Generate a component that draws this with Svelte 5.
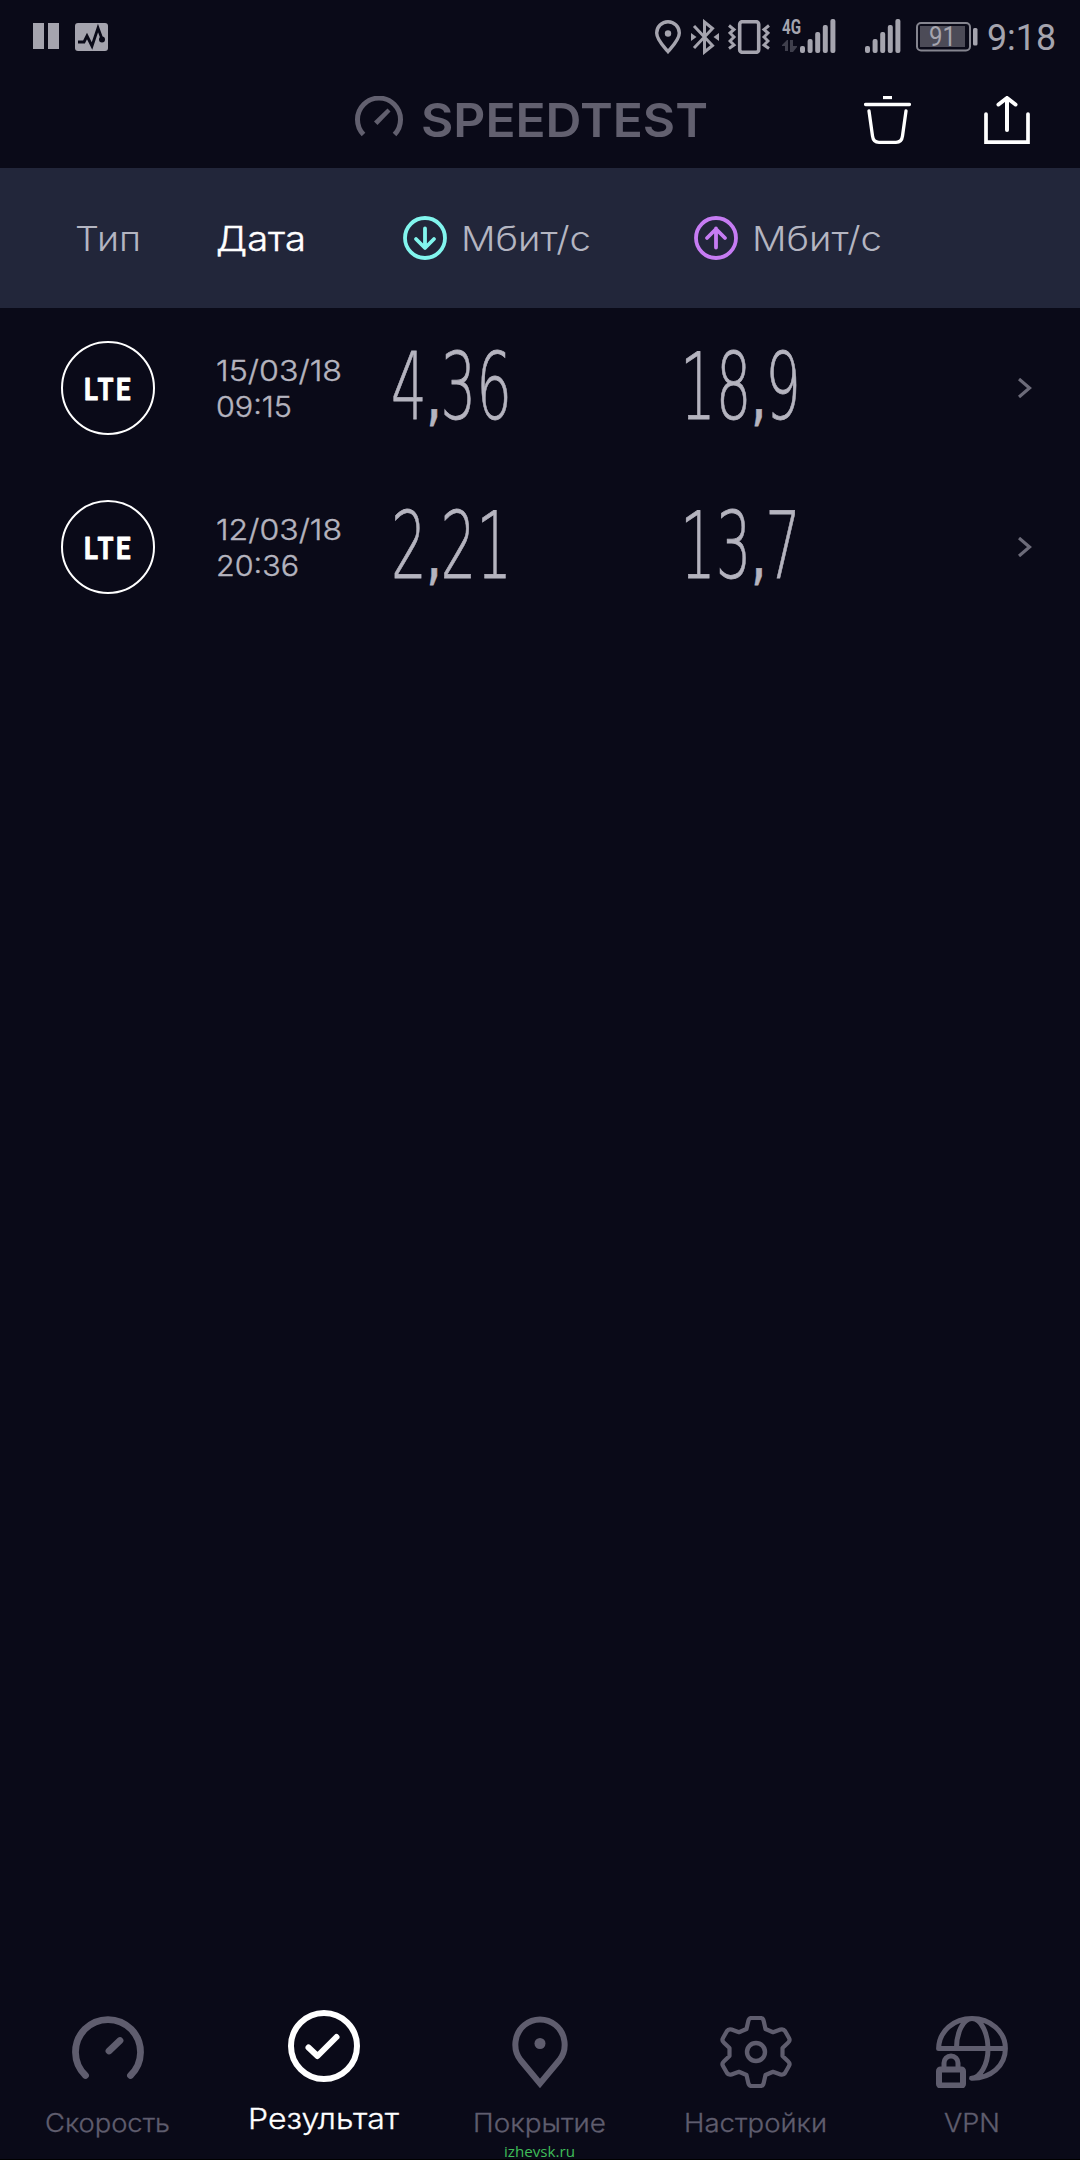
<script lang="ts">
  interface Result {
    type: string
    date: string
    time: string
    timeWidth: number
    download: string
    upload: string
  }

  interface Tab {
    id: string
    label: string
    width: number
  }

  const results: Result[] = [
    { type: 'LTE', date: '15/03/18', time: '09:15', timeWidth: 76, download: '4,36', upload: '18,9' },
    { type: 'LTE', date: '12/03/18', time: '20:36', timeWidth: 83, download: '2,21', upload: '13,7' }
  ]

  const tabs: Tab[] = [
    { id: 'speed', label: 'Скорость', width: 125 },
    { id: 'results', label: 'Результат', width: 151 },
    { id: 'coverage', label: 'Покрытие', width: 133 },
    { id: 'settings', label: 'Настройки', width: 143 },
    { id: 'vpn', label: 'VPN', width: 56 }
  ]

  let active = $state('results')
</script>

{#snippet fit(text: string, width: number, height: number, base: number)}
  <svg class="fit" {width} {height} role="img" aria-label={text}>
    <text x="0" y={base} textLength={width} lengthAdjust="spacingAndGlyphs">{text}</text>
  </svg>
{/snippet}

{#snippet figure(value: string)}
  {@const [whole, part] = value.split(',')}
  <svg class="fit" width="121" height="80" role="img" aria-label={value}>
    <text x="0" y="71" textLength="121" lengthAdjust="spacingAndGlyphs">{whole}<tspan class="comma" dx="3">,</tspan><tspan dx="1">{part}</tspan></text>
  </svg>
{/snippet}

{#snippet signal()}
  <svg width="36" height="34" viewBox="0 0 36 34" fill="currentColor">
    <rect x="0" y="27" width="5" height="7" rx="2" />
    <rect x="7.6" y="20" width="5" height="14" rx="2" />
    <rect x="15.2" y="13" width="5" height="21" rx="2" />
    <rect x="22.8" y="6" width="5" height="28" rx="2" />
    <rect x="30.4" y="0" width="5" height="34" rx="2" />
  </svg>
{/snippet}

<div class="screen">
  <div class="status">
    <svg class="pause" width="26" height="26" fill="currentColor">
      <rect width="11" height="26" /><rect x="15" width="11" height="26" />
    </svg>
    <svg class="graph" width="33" height="28" viewBox="0 0 33 28">
      <rect width="33" height="28" rx="3" fill="currentColor" />
      <path d="M3 19h6l3-6 5 10 6-18 4 11" fill="none" stroke="#0a0a18" stroke-width="2.8" />
      <circle cx="27" cy="16.5" r="3" fill="#0a0a18" />
    </svg>

    <svg class="pin" width="26" height="34" viewBox="0 0 26 34" fill="none" stroke="currentColor" stroke-width="3.4">
      <path d="M13 31.5C9 26.5 1.7 20 1.7 13a11.300 11.300 0 0 1 22.600 0C24.300 20 17 26.500 13 31.500z" />
      <circle cx="13" cy="13.500" r="3.200" fill="currentColor" stroke="none" />
    </svg>
    <svg class="bt" width="28" height="36" viewBox="0 0 28 36" fill="none" stroke="currentColor" stroke-width="3">
      <path d="M3 7l18.500 19.500-8 6.500V3L21.500 9.500 3 29" />
      <path d="M0 14l5.500 4-5.500 4zM28 14l-5.500 4 5.500 4z" fill="currentColor" stroke="none" />
    </svg>
    <svg class="vibrate" width="42" height="34" viewBox="0 0 42 34" fill="none" stroke="currentColor">
      <rect x="11.700" y="1.700" width="19" height="30.600" rx="2.500" stroke-width="3.600" />
      <path d="M1 5.500l5 4-4 3.500 4 4-4 4 4 4-5 3.500M41 5.500l-5 4 4 3.500-4 4 4 4-4 4 5 3.500" stroke-width="3" />
    </svg>
    <div class="net">
      <span class="gen">{@render fit('4G', 19, 16, 15)}</span>
      <svg width="17" height="12" viewBox="0 0 17 12" fill="#3f3f4c">
        <path d="M0 5l5-5h1v11H3V6H0zM8 0h3v6h4v1l-4 5H8z" />
      </svg>
    </div>
    {@render signal()}
    <span class="second">{@render signal()}</span>
    <svg class="battery" width="62" height="30" viewBox="0 0 62 30">
      <rect x="1" y="1" width="53" height="27.500" rx="4" fill="none" stroke="#85858f" stroke-width="2" />
      <rect x="4" y="4" width="45" height="21" fill="#4c4b57" />
      <rect x="57" y="6" width="4.500" height="17.500" rx="1.500" fill="currentColor" />
      <text x="13" y="24" textLength="27" lengthAdjust="spacingAndGlyphs">91</text>
    </svg>
    <span class="clock">{@render fit('9:18', 69, 30, 27)}</span>
  </div>

  <header>
    <svg class="gauge" width="48" height="41" viewBox="0 0 48 41">
      <path d="M8.500 38.500A21.500 21.500 0 1 1 39.500 38.500" fill="none" stroke="currentColor" stroke-width="5" />
      <path d="M32.500 12.500l3 3L22.500 29l-3.500-3.500z" fill="currentColor" />
    </svg>
    <h1>{@render fit('SPEEDTEST', 287, 40, 37)}</h1>
    <button class="trash" aria-label="Удалить">
      <svg width="47" height="48" viewBox="0 0 47 48" fill="none" stroke="currentColor" stroke-width="3.300" stroke-linecap="round">
        <path d="M19 1.500h9" stroke-linecap="butt" />
        <path d="M1.500 8.500h44M5 15l3.500 25q.8 6.300 6.500 6.300h17q5.700 0 6.500-6.300L42 15" />
      </svg>
    </button>
    <button class="share" aria-label="Поделиться">
      <svg width="46" height="48" viewBox="0 0 46 48" fill="none" stroke="currentColor" stroke-width="4" stroke-linecap="round">
        <path d="M2 18v28.200h42V18" stroke-width="3.700" />
        <path d="M23 2v32M14.500 8.500L23 2l8.500 6.500" />
      </svg>
    </button>
  </header>

  <div class="grid head">
    <span class="type">{@render fit('Тип', 66, 36, 31)}</span>
    <span class="sorted">{@render fit('Дата', 90, 36, 31)}</span>
    <span class="unit">
      <svg class="down" width="44" height="44" viewBox="0 0 44 44">
        <circle cx="22" cy="22" r="20" />
        <path d="M22 12.500v19M13 23l9 9 9-9" />
      </svg>
      {@render fit('Мбит/с', 130, 36, 30)}
    </span>
    <span class="unit">
      <svg class="up" width="44" height="44" viewBox="0 0 44 44">
        <circle cx="22" cy="22" r="20" />
        <path d="M22 31.500v-19M13 22l9-9 9 9" />
      </svg>
      {@render fit('Мбит/с', 130, 36, 30)}
    </span>
  </div>

  <main>
    {#each results as row (row.date)}
      <div class="grid row">
        <span class="badge">{@render fit(row.type, 49, 24, 23.5)}</span>
        <span class="when">
          {@render fit(row.date, 126, 36, 29)}
          {@render fit(row.time, row.timeWidth, 36, 29)}
        </span>
        <span class="speed">{@render figure(row.download)}</span>
        <span class="speed up">{@render figure(row.upload)}</span>
        <svg class="chevron" width="14" height="20" viewBox="0 0 14 20" fill="none" stroke="currentColor" stroke-width="3.200">
          <path d="M1 1l10.500 9L1 19" />
        </svg>
      </div>
    {/each}
  </main>

  <nav>
    {#each tabs as tab (tab.id)}
      <button class="tab" class:active={active === tab.id} onclick={() => (active = tab.id)}>
        <svg width="72" height="72" viewBox="0 0 72 72" fill="none" stroke="currentColor" stroke-width="6" stroke-linecap="round">
          {#if tab.id === 'speed'}
            <path d="M13.500 59.500A32.500 32.500 0 1 1 58.500 59.500M37 35l11-10.500" stroke-width="6.800" />
          {:else if tab.id === 'results'}
            <circle cx="36" cy="36" r="33" />
            <path d="M20.500 37.500l9 8.500L48.500 27" stroke-width="6" stroke-linejoin="round" />
          {:else if tab.id === 'coverage'}
            <path d="M36 67.500L16.500 44C8 33 10.500 17 20.500 9a25 25 0 0 1 31 0C61.500 17 64 33 55.500 44z" stroke-width="6" />
            <circle cx="36" cy="27.500" r="5.500" fill="currentColor" stroke="none" />
          {:else if tab.id === 'settings'}
            <path d="M31.500 2h9q2.500 0 3.200 3l1.800 8 7.500 3.200 7.500-2.700q3-.8 4.500 1.500l4 7q1.500 2.500-1 4.800L62.500 32v8l5.500 5.200q2.500 2.300 1 4.800l-4 7q-1.500 2.300-4.500 1.500L53 55.800 45.500 59l-1.800 8q-.7 3-3.200 3h-9q-2.500 0-3.200-3l-1.800-8-7.500-3.200-7.500 2.700q-3 .8-4.500-1.500l-4-7q-1.500-2.500 1-4.800L9.500 40v-8L4 26.800q-2.500-2.300-1-4.800l4-7q1.500-2.300 4.500-1.500l7.500 2.700 7.500-3.200 1.800-8q.7-3 3.200-3z" stroke-width="4.200" stroke-linejoin="round" />
            <circle cx="36" cy="36" r="9" stroke-width="4.400" />
          {:else}
            <path d="M2.600 32.500C3 15 18 2.600 36 2.600S69.400 15.500 69.400 32.500 55 62.500 35.500 62.200M2.600 32.500H69M20.500 32C20.500 17 27 2.600 36 2.600S52 17 52 33 44 62 35.500 62.200" stroke-width="5" />
            <rect x="3" y="53.500" width="24" height="16" rx="1.500" stroke-width="6" />
            <path d="M8 52v-5a7 7 0 0 1 14 0v5" stroke-width="5" />
          {/if}
        </svg>
        <span class="label">{@render fit(tab.label, tab.width, 34, 26)}</span>
      </button>
    {/each}
    <span class="mark">{@render fit('izhevsk.ru', 71, 20, 16)}</span>
  </nav>
</div>

<style>
  :global(body) { margin: 0; background: #0a0a18; }

  .screen {
    display: flex;
    flex-direction: column;
    width: 1080px;
    height: 2160px;
    background: #0a0a18;
    font-family: Inter, "Noto Sans", sans-serif;
    overflow: hidden;
  }
  svg { display: block; flex: none; }
  .fit { overflow: visible; fill: currentColor; }

  button {
    margin: 0;
    padding: 0;
    border: 0;
    background: none;
    color: inherit;
    font: inherit;
  }

  .status {
    display: flex;
    align-items: flex-start;
    height: 73px;
    padding: 19px 0 0 33px;
    box-sizing: border-box;
    color: #a5a4ae;
  }
  .pause { margin-top: 4px; }
  .graph { margin: 4px 0 0 16px; }
  .pin { margin: 1px 0 0 547px; }
  .bt { margin-left: 10px; }
  .vibrate { margin: 1px 0 0 9px; }
  .net {
    display: flex;
    flex-direction: column;
    gap: 5px;
    width: 18px;
    margin-left: 12px;
  }
  .gen { font: 700 21px Roboto, sans-serif; }
  .second { margin-left: 29px; }
  .battery {
    margin: 3px 0 0 15px;
    font: 400 27px Roboto, sans-serif;
    fill: currentColor;
  }
  .clock {
    margin: 4px 0 0 9px;
    font: 400 37px Roboto, sans-serif;
  }

  header {
    display: flex;
    align-items: flex-start;
    height: 95px;
    padding: 23px 0 0 355px;
    box-sizing: border-box;
    color: #62606f;
  }
  h1 {
    margin: 4px 0 0 18px;
    font: 600 47px Inter, sans-serif;
  }
  .trash, .share { color: #fff; }
  .trash { margin-left: 156px; }
  .share { margin-left: 73px; }

  .grid {
    display: grid;
    grid-template-columns: 216px 175px 291px 1fr;
    align-items: center;
  }
  .head {
    height: 140px;
    background: #22263a;
    color: #b4b5c1;
    font-size: 34px;
    font-weight: 300;
  }
  .type { padding-left: 75px; }
  .sorted {
    color: #fff;
    stroke: currentColor;
    stroke-width: 0.400;
  }
  .unit {
    display: flex;
    align-items: center;
    gap: 14px;
    padding-left: 12px;
  }
  .unit svg:first-child {
    fill: none;
    stroke: currentColor;
    stroke-width: 3.800;
    stroke-linecap: round;
    stroke-linejoin: round;
  }
  .unit .down { color: #82f5ee; }
  .unit .up { color: #c67cf3; }
  .unit .fit { margin-top: 2px; }

  main { flex: 1; }
  .row {
    grid-template-columns: 216px 175px 291px 336px 1fr;
    height: 159px;
    color: #b5b4bf;
  }
  .badge {
    display: flex;
    align-items: center;
    justify-content: center;
    width: 94px;
    height: 94px;
    margin-left: 61px;
    box-sizing: border-box;
    border: 2px solid #fff;
    border-radius: 50%;
    color: #fff;
    font: 700 31px Roboto, sans-serif;
    letter-spacing: 3px;
    stroke: #fff;
    stroke-width: 0.800;
    stroke-linejoin: round;
  }
  .when {
    font-size: 29px;
    font-weight: 300;
    stroke: currentColor;
    stroke-width: 0.400;
  }
  .speed {
    font: 200 93px "DejaVu Sans", sans-serif;
    stroke: currentColor;
    stroke-width: 0.800;
  }
  .speed.up { margin-left: -2px; }
  .comma { font-size: 50px; font-weight: 700; }
  .chevron { color: #6c6b79; }

  nav {
    position: relative;
    display: grid;
    grid-template-columns: repeat(5, 216px);
    height: 144px;
    border-bottom: 1px solid #000;
    box-sizing: border-box;
    color: #5f5d6e;
  }
  .tab {
    display: flex;
    flex-direction: column;
    align-items: center;
    gap: 18px;
  }
  .label {
    margin-right: 1px;
    font-size: 25.500px;
    font-weight: 300;
    stroke: currentColor;
    stroke-width: 0.300;
  }
  .active {
    color: #fff;
    margin-top: -6px;
  }
  .active .label { font-size: 28.500px; margin-top: 3px; }
  .mark {
    position: absolute;
    left: 504px;
    bottom: -2px;
    color: #3fbd58;
    font: 400 15px "Open Sans", sans-serif;
  }
</style>
